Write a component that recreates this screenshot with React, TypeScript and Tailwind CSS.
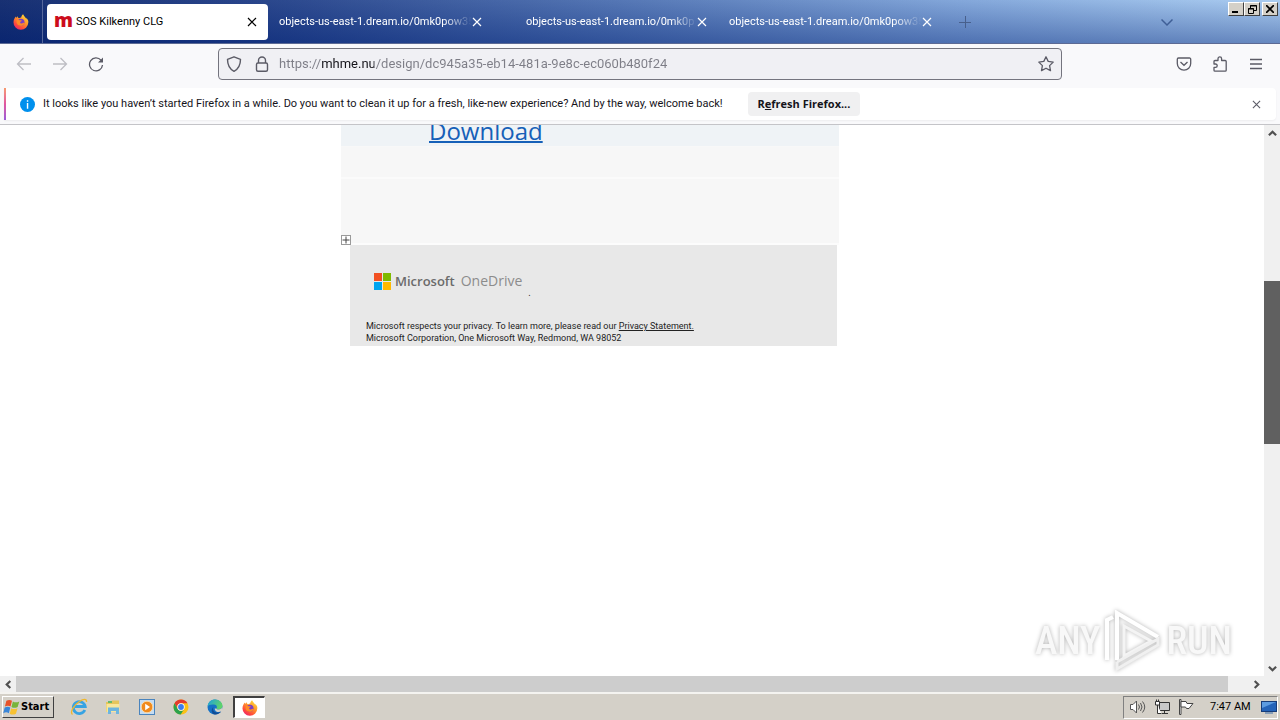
import type { ReactNode } from "react";

const tabs = [
  { title: "objects-us-east-1.dream.io/0mk0pow35", indent: false },
  { title: "objects-us-east-1.dream.io/0mk0p", indent: true },
  { title: "objects-us-east-1.dream.io/0mk0pow35", indent: false },
];

function Cross({ className }: { className: string }) {
  return (
    <svg className={className} viewBox="0 0 10 10" fill="none" stroke="currentColor" strokeWidth="1.2">
      <path d="M1 1l8 8M9 1L1 9" />
    </svg>
  );
}

function Chevron({ className }: { className: string }) {
  return (
    <svg className={className} viewBox="0 0 10 10" fill="none" stroke="currentColor" strokeWidth="2.4">
      <path d="M1 7l4-4 4 4" />
    </svg>
  );
}

function FirefoxIcon() {
  return (
    <svg className="h-4 w-4" viewBox="0 0 16 16">
      <defs>
        <linearGradient id="ffFlame" x1="0.85" y1="0" x2="0.2" y2="1">
          <stop offset="0" stopColor="#ffe43c" />
          <stop offset="0.4" stopColor="#ff9a2a" />
          <stop offset="0.75" stopColor="#ff4b3c" />
          <stop offset="1" stopColor="#e81d72" />
        </linearGradient>
      </defs>
      <path
        d="M15 6.2c-.4-1-1.300-2-2-2.400.3.600.5 1.200.6 1.700C12.700 3 10.800 2.200 10.100.2 8.700 1.100 8.300 2.600 8.200 3.500c-.8.050-1.500.3-2.100.7C5.300 3.900 4.700 3.200 4.600 2.200c-.7.4-1.100 1.100-1.300 1.800-.3-.3-.3-1.200-.3-1.600C1.600 3.700.5 5.800.5 8.300a7.400 7.400 0 0 0 14.800.3c.1-.9 0-1.700-.3-2.400z"
        fill="url(#ffFlame)"
      />
      <circle cx="8" cy="8.300" r="3.500" fill="#7a3fc4" />
      <path d="M3.600 6.200c1.300-.9 2.600-.5 3.200 0 .5.100 1.500.1 2 .2-.1.800-1.200 1-1.700 1.500-.1 1.500 1.600 2 3 1.200 1-.5 1.600-.2 1.500.3-1 2-3.300 2.800-5.200 2.200-2-.7-3.200-2.600-2.800-5.400z" fill="#ff8a26" />
    </svg>
  );
}

function WindowsFlag() {
  return (
    <svg className="h-[18px] w-[18px]" viewBox="0 0 16 16">
      <path d="M3 2.500c2-1.200 3.500-1 5 0L6.700 7.600c-1.500-1-3-1.100-5 0z" fill="#e8532a" />
      <path d="M8.800 3c1.700 1 3.600 1 5.700 0L13 8c-2 1-3.800 1-5.500 0z" fill="#78b43a" />
      <path d="M1.500 8.500c2-1.100 3.500-1 5 0L5.200 13.500c-1.500-1-3-1.100-5 0z" fill="#3a86d8" />
      <path d="M7.300 9c1.700 1 3.500 1 5.600 0l-1.400 5c-2 1-3.900 1-5.500 0z" fill="#f7c130" />
    </svg>
  );
}

function InternetExplorerIcon() {
  return (
    <svg className="h-[18px] w-[18px]" viewBox="0 0 18 18" fill="none">
      <path d="M14.800 12a6 6 0 1 1 .4-3.500H5" stroke="#36a3e3" strokeWidth="2.800" />
      <path d="M2.500 16.500C-.5 14 4 7 9.500 3.500 13 1 17 .2 16.500 4" stroke="#efb72c" strokeWidth="1.300" />
    </svg>
  );
}

function ExplorerIcon() {
  return (
    <svg className="h-4 w-4" viewBox="0 0 16 16">
      <path d="M1 3h5l1-1.500h7V13H1z" fill="#e5c55c" />
      <path d="M3 2h4v2H3z" fill="#66b96b" />
      <path d="M1.500 5h13v8h-13z" fill="#f8e69b" />
      <path d="M3 8.500h11V15h-3v-3H6v3H3z" fill="#6db5df" />
    </svg>
  );
}

function MediaPlayerIcon() {
  return (
    <svg className="h-4 w-4" viewBox="0 0 16 16">
      <rect x=".5" y=".5" width="15" height="15" fill="#c5dcf2" stroke="#4a84bd" />
      <circle cx="8" cy="8" r="5.800" fill="#f08a1d" stroke="#fbd7a2" />
      <path d="M6.200 4.800L11 8l-4.800 3.200z" fill="#fff" />
    </svg>
  );
}

function ChromeIcon() {
  return (
    <svg className="h-4 w-4" viewBox="0 0 16 16">
      <circle cx="8" cy="8" r="7.500" fill="#fbc116" />
      <path d="M1.500 4.250A7.500 7.500 0 0 1 14.500 4.250H8A3.750 3.750 0 0 0 4.750 9.900z" fill="#e33b2e" />
      <path d="M1.500 4.250A7.500 7.500 0 0 0 7.700 15.500l3.500-5.600a3.750 3.750 0 0 1-6.450 0z" fill="#2ba24c" />
      <circle cx="8" cy="8" r="3.700" fill="#fff" />
      <circle cx="8" cy="8" r="2.900" fill="#3b7ded" />
    </svg>
  );
}

function EdgeIcon() {
  return (
    <svg className="h-4 w-4" viewBox="0 0 16 16">
      <defs>
        <linearGradient id="edgeTop" x1="0" y1="0" x2="1" y2="0.4">
          <stop offset="0" stopColor="#1c9fe0" />
          <stop offset="1" stopColor="#5fd36a" />
        </linearGradient>
      </defs>
      <circle cx="8" cy="8" r="7.500" fill="#1571c6" />
      <path d="M.5 7.500C1 3 4.200.5 8 .5c4.500 0 7.500 3.200 7.500 6.300 0 2.200-1.700 3.600-3.800 3.600-1.700 0-2.500-.6-2.200-1 .9-1 .5-3.600-2.500-3.900C4 5.200 1.200 6 .5 7.500z" fill="url(#edgeTop)" />
      <path d="M6.500 8c-1.500 2.500.5 5.600 3.800 5.600 1.700 0 3-.6 3.700-1-1 1.700-3 2.900-6 2.900C4.500 15 3.500 10.500 6.500 8z" fill="#124c95" />
      <path d="M9.500 9.400c-.3.500.5 1 2.200 1 1.700 0 3.100-.9 3.800-2.400v4l-1.500.6c-2.700 1.200-6.500-.1-6.300-3.200z" fill="#d4d0c8" />
    </svg>
  );
}

function ShowDesktopIcon() {
  return (
    <svg className="h-4 w-4" viewBox="0 0 16 16">
      <rect x=".5" y="2.500" width="15" height="10" fill="#2463b8" stroke="#173c78" />
      <path d="M1 3h14L1 9z" fill="#5c9be0" />
      <path d="M4 14h8" stroke="#3a6ca8" />
    </svg>
  );
}

function WindowButton({ label, children }: { label: string; children: ReactNode }) {
  return (
    <button
      aria-label={label}
      className="flex h-[14px] w-4 items-center justify-center border border-t-white border-l-white border-r-[#404040] border-b-[#404040] bg-[#d4d0c8] text-black"
    >
      {children}
    </button>
  );
}

function TabBar() {
  return (
    <div className="flex h-11 shrink-0 border-b border-[#5c6a94] bg-[linear-gradient(to_bottom,rgba(255,255,255,0.06),rgba(10,40,120,0.4)),linear-gradient(to_right,#0a246a_0%,#1c3a84_20%,#4a6eb0_48%,#7ca2d8_75%,#a6caf0_100%)] text-white">
      <button aria-label="Firefox View" className="flex w-[43px] items-center justify-center border-r border-[#56689c]">
        <FirefoxIcon />
      </button>
      <div className="flex items-start gap-1 pt-1 pl-1">
        <div className="flex h-9 w-[221px] items-center rounded bg-white pr-[11px] pl-[7px] text-black">
          <span className="w-[22px] pb-[5px] font-['Open_Sans',sans-serif] text-[19px] leading-6 font-extrabold text-[#cc0c1c]">m</span>
          <span className="flex-1 pt-px text-[11px]">SOS Kilkenny CLG</span>
          <button aria-label="Close tab">
            <Cross className="h-[10px] w-[10px]" />
          </button>
        </div>
        {tabs.map((tab, i) => (
          <div key={i} className={`flex h-9 w-[221px] items-center pr-[11px] ${tab.indent ? "pl-[29px]" : "pl-[7px]"}`}>
            <span className="min-w-0 flex-1 mask-r-from-85% pt-px text-[11px] whitespace-nowrap">{tab.title}</span>
            <button aria-label="Close tab">
              <Cross className="h-[10px] w-[10px]" />
            </button>
          </div>
        ))}
        <button aria-label="New tab" className="flex h-9 w-9 items-center justify-center text-[#48608c]">
          <svg className="h-3 w-3" viewBox="0 0 12 12" stroke="currentColor">
            <path d="M0 6.500h12M6.500 0v12" />
          </svg>
        </button>
      </div>
      <button aria-label="List all tabs" className="mr-[55px] ml-auto text-[#3f5f96]">
        <svg className="h-3 w-3" viewBox="0 0 12 12" fill="none" stroke="currentColor" strokeWidth="1.500">
          <path d="M.5 3.500L6 9l5.500-5.500" />
        </svg>
      </button>
      <div className="flex pt-[2px] pr-[2px]">
        <WindowButton label="Minimize">
          <svg className="h-2 w-2" viewBox="0 0 8 8">
            <path d="M0 6h6v2H0z" />
          </svg>
        </WindowButton>
        <WindowButton label="Restore">
          <svg className="h-[9px] w-[9px]" viewBox="0 0 9 9" fill="none" stroke="currentColor">
            <path d="M2.500 3V.500h6v5H6M2 1h7M.5 3.500h5v5h-5zM0 4h6" />
          </svg>
        </WindowButton>
        <div className="pl-[2px]">
          <WindowButton label="Close">
            <svg className="h-2 w-2" viewBox="0 0 8 8" stroke="currentColor" strokeWidth="1.700">
              <path d="M0 0l8 8M8 0L0 8" />
            </svg>
          </WindowButton>
        </div>
      </div>
    </div>
  );
}

function Toolbar() {
  return (
    <div className="flex h-11 shrink-0 items-center bg-[#f9f9fb] pb-1 text-[#5b5b66]">
      <div className="flex w-[218px] items-center gap-5 pl-4">
        <button aria-label="Back" className="text-[#bebec4]">
          <svg className="h-4 w-4" viewBox="0 0 16 16" fill="none" stroke="currentColor" strokeWidth="1.300">
            <path d="M15 8H1.500M7.500 2l-6 6 6 6" />
          </svg>
        </button>
        <button aria-label="Forward" className="text-[#bebec4]">
          <svg className="h-4 w-4" viewBox="0 0 16 16" fill="none" stroke="currentColor" strokeWidth="1.300">
            <path d="M1 8h13.500M8.500 2l6 6-6 6" />
          </svg>
        </button>
        <button aria-label="Reload">
          <svg className="h-4 w-4" viewBox="0 0 16 16" fill="none" stroke="currentColor" strokeWidth="1.300">
            <path d="M13 4.200A6.500 6.500 0 1 0 14.500 9" />
            <path d="M15 1.500v5H10z" fill="currentColor" stroke="none" />
          </svg>
        </button>
      </div>
      <div className="flex h-8 flex-1 items-center rounded border border-[#74747e] bg-[#f0f0f4] px-[7px]">
        <svg className="h-4 w-4" viewBox="0 0 16 16" fill="none" stroke="currentColor" strokeWidth="1.400">
          <path d="M8 .8l6.500 2.500c0 5-1.500 9.500-6.500 12-5-2.500-6.500-7-6.500-12z" strokeLinejoin="round" />
        </svg>
        <svg className="ml-3 h-4 w-4" viewBox="0 0 16 16" fill="none" stroke="currentColor" strokeWidth="1.400">
          <rect x="2.500" y="7" width="11" height="8.200" rx="1.500" />
          <path d="M4.500 7V4.500a3.500 3.500 0 0 1 7 0V7" />
        </svg>
        <input
          aria-label="Address"
          className="ml-[9px] min-w-0 flex-1 bg-[linear-gradient(90deg,#7d7d86_43px,#15141a_43px,#15141a_95px,#7d7d86_95px)] bg-clip-text text-[13px] text-transparent outline-none"
          defaultValue="https://mhme.nu/design/dc945a35-eb14-481a-9e8c-ec060b480f24"
        />
        <button aria-label="Bookmark this page">
          <svg className="h-4 w-4" viewBox="0 0 16 16" fill="none" stroke="currentColor" strokeWidth="1.300" strokeLinejoin="round">
            <path d="M8 .8l2.200 4.600 5 .7-3.600 3.500.9 5L8 12.200l-4.500 2.400.9-5L.8 6.100l5-.7z" />
          </svg>
        </button>
      </div>
      <div className="flex w-[218px] items-center justify-end gap-5 pr-4">
        <button aria-label="Save to Pocket">
          <svg className="h-4 w-4" viewBox="0 0 16 16" fill="none" stroke="currentColor" strokeWidth="1.300">
            <path d="M2.500 2h11a1.200 1.200 0 0 1 1.200 1.200V7.500a6.700 6.700 0 0 1-13.400 0V3.200A1.200 1.200 0 0 1 2.500 2z" />
            <path d="M4.500 6L8 9.300 11.500 6" />
          </svg>
        </button>
        <button aria-label="Extensions">
          <svg className="h-4 w-4" viewBox="0 0 16 16" fill="none" stroke="currentColor" strokeWidth="1.300" strokeLinejoin="round">
            <path d="M6 4.500V2.700a1.800 1.800 0 0 1 3.600 0v1.800h3.600a1 1 0 0 1 1 1v8.700a1 1 0 0 1-1 1H3a1 1 0 0 1-1-1v-2.800h1.500a1.700 1.700 0 0 0 0-3.400H2V5.500a1 1 0 0 1 1-1z" />
          </svg>
        </button>
        <button aria-label="Open application menu">
          <svg className="h-4 w-4" viewBox="0 0 16 16" stroke="currentColor" strokeWidth="1.300">
            <path d="M2 3.500h12M2 8h12M2 12.500h12" />
          </svg>
        </button>
      </div>
    </div>
  );
}

function NotificationBar() {
  return (
    <div className="shrink-0 border-b border-[#c4c4c8] bg-[#f9f9fb] pr-1 pb-1 pl-1">
      <div className="flex h-8 items-center rounded-r bg-white text-[#15141a] shadow-xs">
        <div className="h-full w-[2px] bg-linear-to-b from-[#f79a6e] via-[#e0559f] to-[#9a5ad8]" />
        <svg className="ml-[14px] h-[15px] w-[15px]" viewBox="0 0 16 16">
          <circle cx="8" cy="8" r="8" fill="#0090ed" />
          <path d="M7.300 3.500h1.500V5H7.300zM7.300 6.500h1.500v6H7.300z" fill="#fff" />
        </svg>
        <p className="ml-2 w-[685px] text-[11px] whitespace-nowrap">
          It looks like you haven’t started Firefox in a while. Do you want to clean it up for a fresh, like-new experience? And by the way, welcome back!
        </p>
        <button className="ml-5 h-6 w-28 rounded bg-[#f0f0f1] font-['Open_Sans',sans-serif] text-[11px] font-bold whitespace-nowrap">
          R<u>e</u>fresh Firefox...
        </button>
        <button aria-label="Dismiss" className="mr-[15px] ml-auto text-[#5b5b66]">
          <Cross className="h-[9px] w-[9px]" />
        </button>
      </div>
    </div>
  );
}

function Email() {
  return (
    <div className="ml-[341px] w-[498px] font-['Open_Sans','Noto_Sans',sans-serif]">
      <div className="h-[22px] overflow-hidden border-b border-[#f8f8f8] bg-[#eff3f6] pl-[88px]">
        <a href="#" className="-mt-3 block text-[24px] leading-9 text-[#1660b8] underline decoration-2 underline-offset-1">
          Download
        </a>
      </div>
      <div className="h-8 border-b-2 border-[#fbfbfb] bg-[#f7f7f7]" />
      <div className="flex h-[66px] items-end border-b-2 border-[#fcfcfc] bg-[#f7f7f7]">
        <svg className="-mb-[2px] h-[10px] w-[10px]" viewBox="0 0 10 10" fill="none">
          <rect x=".5" y=".5" width="9" height="9" fill="#fff" stroke="#9a9a9a" />
          <path d="M1.500 5h7M5 1.500v7" stroke="#444" />
        </svg>
      </div>
      <div className="mr-[2px] ml-[9px] h-[101px] bg-[#e8e8e8] pt-[18px] pl-4 text-[#222]">
        <div className="flex items-center pl-2">
          <div className="grid grid-cols-2 gap-px">
            <div className="h-2 w-2 bg-[#f25022]" />
            <div className="h-2 w-2 bg-[#7fba00]" />
            <div className="h-2 w-2 bg-[#00a4ef]" />
            <div className="h-2 w-2 bg-[#ffb900]" />
          </div>
          <span className="ml-1 text-[13px] leading-[18px] font-semibold text-[#6b6b6b]">Microsoft</span>
          <span className="ml-[6px] text-[14px] leading-[18px] text-[#8c8c8c]">OneDrive</span>
          <span className="mt-6 ml-[6px] text-[9px] leading-3">.</span>
        </div>
        <p className="pt-[21px] font-['Roboto',sans-serif] text-[9px] leading-3">
          Microsoft respects your privacy. To learn more, please read our{" "}
          <a href="#" className="underline">
            Privacy Statement.
          </a>
          <br />
          Microsoft Corporation, One Microsoft Way, Redmond, WA 98052
        </p>
      </div>
    </div>
  );
}

function Watermark() {
  return (
    <div className="pointer-events-none absolute right-12 bottom-12 flex items-center gap-1 font-['Roboto_Condensed','Roboto',sans-serif] text-[38px] leading-none font-medium text-[#f8f8f8] drop-shadow-[0_0_2px_rgba(0,0,0,0.3)]">
      <span>ANY</span>
      <svg className="h-[62px] w-[58px]" viewBox="0 0 58 62" fill="none" strokeWidth="4">
        <path d="M3 50V10l6-3" stroke="#fff" />
        <path d="M13 50V3l41 24" stroke="#fff" />
        <path d="M20 16v30l27-15z" stroke="#f4f4f4" strokeWidth="3" />
        <path d="M13 52l41-23M13 52v7l41-24v-8" stroke="#f0f0f0" strokeWidth="3" />
      </svg>
      <span>RUN</span>
    </div>
  );
}

function VerticalScrollbar() {
  return (
    <div className="flex w-4 flex-col bg-[#f0f0f0] text-[#505050]">
      <button aria-label="Scroll up" className="flex h-4 items-center justify-center">
        <Chevron className="h-[9px] w-[9px]" />
      </button>
      <div className="grow-[140]" />
      <div className="grow-[163] bg-[#606060]" />
      <div className="grow-[216]" />
      <button aria-label="Scroll down" className="flex h-4 items-center justify-center">
        <Chevron className="h-[9px] w-[9px] rotate-180" />
      </button>
    </div>
  );
}

function HorizontalScrollbar() {
  return (
    <div className="flex h-4 shrink-0 bg-[#f0f0f0] pr-4 text-[#505050]">
      <button aria-label="Scroll left" className="flex w-4 items-center justify-center">
        <Chevron className="h-[9px] w-[9px] -rotate-90" />
      </button>
      <div className="grow bg-[#cdcdcd]" />
      <div className="w-5" />
      <button aria-label="Scroll right" className="flex w-4 items-center justify-center">
        <Chevron className="h-[9px] w-[9px] rotate-90" />
      </button>
    </div>
  );
}

function Taskbar() {
  return (
    <div className="flex h-7 shrink-0 items-center border-t-2 border-[#f4f3f0] bg-[#d4d0c8] pr-[2px] pl-[2px] text-black">
      <button className="flex h-[22px] w-[52px] items-center border border-t-white border-l-white border-r-[#404040] border-b-[#404040] font-['DejaVu_Sans_Condensed','DejaVu_Sans',sans-serif] text-[11px] font-bold">
        <WindowsFlag />
        Start
      </button>
      <div className="ml-2 flex">
        <button aria-label="Internet Explorer" className="flex w-[34px] items-center justify-center">
          <InternetExplorerIcon />
        </button>
        <button aria-label="Windows Explorer" className="flex w-[34px] items-center justify-center">
          <ExplorerIcon />
        </button>
        <button aria-label="Media Player" className="flex w-[34px] items-center justify-center">
          <MediaPlayerIcon />
        </button>
        <button aria-label="Chrome" className="flex w-[34px] items-center justify-center">
          <ChromeIcon />
        </button>
        <button aria-label="Edge" className="flex w-[34px] items-center justify-center">
          <EdgeIcon />
        </button>
        <button
          aria-label="Firefox"
          className="ml-px flex h-[22px] w-8 items-center justify-center border border-t-2 border-l-2 border-t-[#404040] border-l-[#404040] border-r-white border-b-white bg-white"
        >
          <FirefoxIcon />
        </button>
      </div>
      <div className="ml-auto flex h-[23px] items-center border border-t-[#808080] border-l-[#808080] border-r-white border-b-white pl-[6px] text-[11px]">
        <svg className="h-4 w-4" viewBox="0 0 16 16" fill="#fff" stroke="#555">
          <path d="M.5 5.500H3L6.500 2v12L3 10.500H.5z" />
          <path d="M8.500 5.500q2 2.500 0 5M10.500 4q3 4 0 8M12.500 2.500q4.500 5.500 0 11" fill="none" />
        </svg>
        <svg className="ml-2 h-4 w-4" viewBox="0 0 16 16" fill="#c8c8c8" stroke="#333">
          <path d="M5.500 3.500h10v8h-10zM8 14.500h6M10.500 11.500v3" />
          <path d="M1.500 2.500h4v3.500h-4zM2.500.5v2M4.500.5v2M3.500 6v8.500h4" fill="#fff" />
        </svg>
        <svg className="ml-2 h-4 w-4" viewBox="0 0 16 16" fill="#fff" stroke="#444">
          <path d="M1.500.5h1.500v15H1.500z" />
          <path d="M3 2.500h5l1 2h6l-2 2.500-2 2.500H8.500l-1-1.500H3z" />
        </svg>
        <span className="ml-4 w-[43px] whitespace-nowrap">7:47 AM</span>
        <button aria-label="Show desktop" className="ml-2">
          <ShowDesktopIcon />
        </button>
      </div>
    </div>
  );
}

export default function App() {
  return (
    <div className="flex h-screen flex-col overflow-hidden bg-white font-['Roboto',sans-serif]">
      <TabBar />
      <Toolbar />
      <NotificationBar />
      <div className="flex min-h-0 flex-1">
        <main className="min-w-0 flex-1 overflow-hidden">
          <Email />
        </main>
        <VerticalScrollbar />
      </div>
      <HorizontalScrollbar />
      <Taskbar />
      <Watermark />
    </div>
  );
}
